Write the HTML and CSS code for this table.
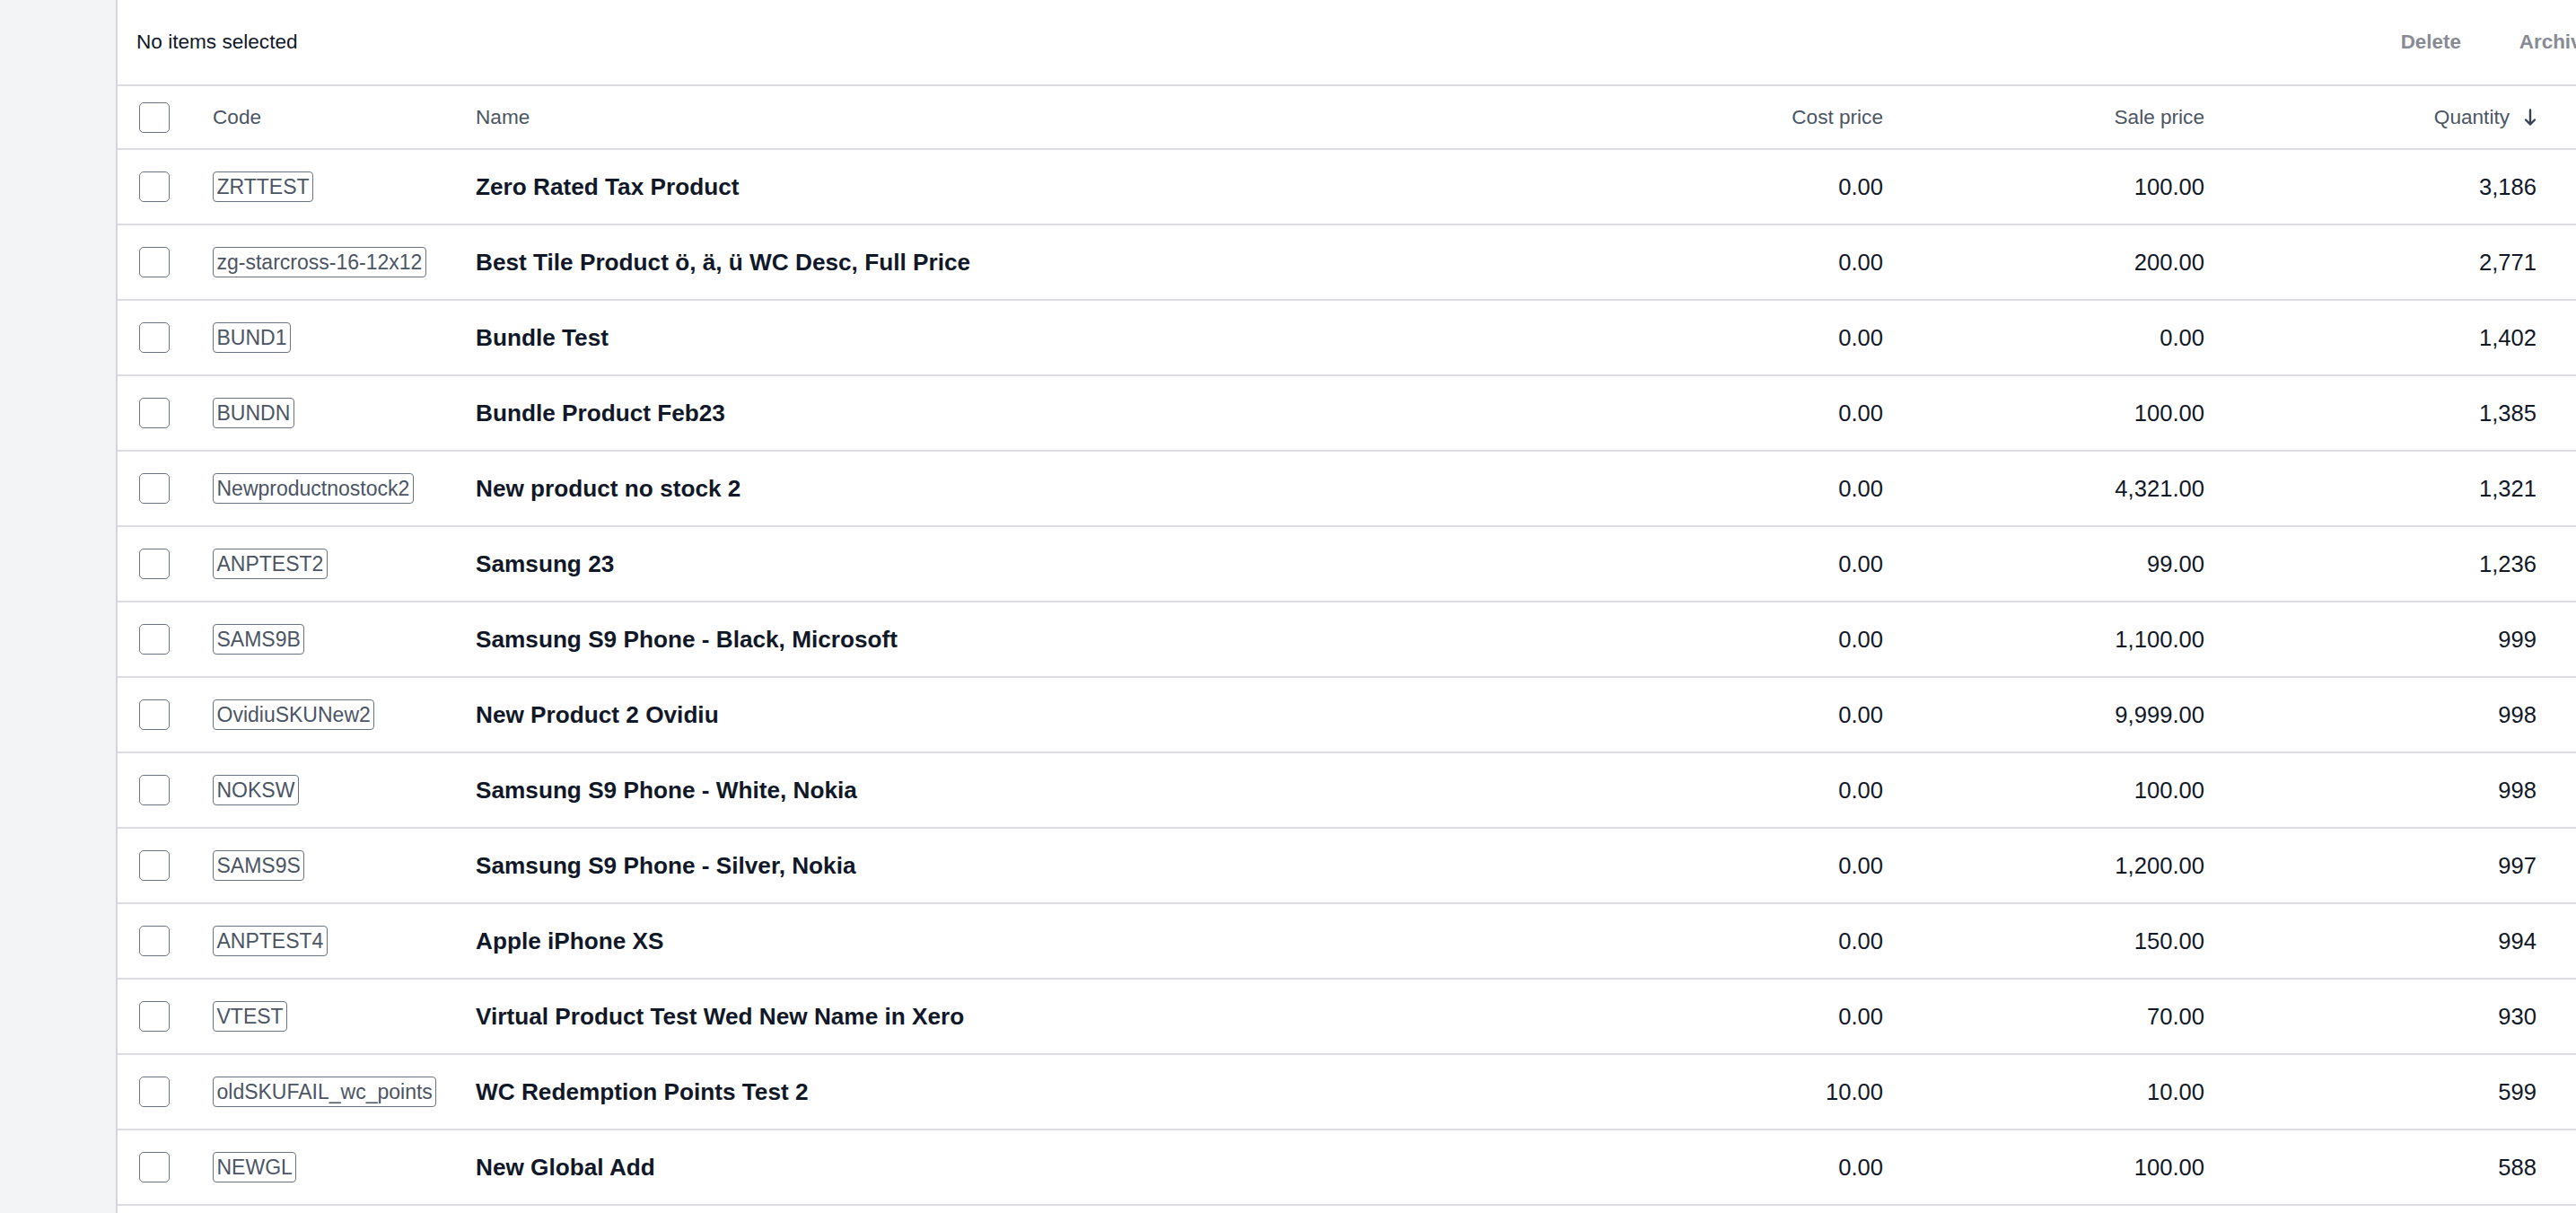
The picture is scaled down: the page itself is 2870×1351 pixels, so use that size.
FILE: index.html
```html
<!DOCTYPE html>
<html lang="en">
<head>
<meta charset="utf-8">
<title>Products</title>
<link rel="stylesheet" href="styles.css">
</head>
<body>
<div class="layout">
  <aside class="sidebar"></aside>
  <main class="main">
    <div class="toolbar">
      <span class="selection">No items selected</span>
      <div class="actions">
        <span class="action">Delete</span>
        <span class="action">Archive</span>
      </div>
    </div>
    <div class="table">
      <div class="row head">
        <div class="cell"><span class="check"></span></div>
        <div class="cell">Code</div>
        <div class="cell">Name</div>
        <div class="cell num">Cost price</div>
        <div class="cell num">Sale price</div>
        <div class="cell num">Quantity<svg class="sort" viewBox="0 0 14 20" width="14" height="20"><path d="M7 1.5V17.5M2 12.5L7 17.5L12 12.5" fill="none" stroke="#374151" stroke-width="2.4" stroke-linecap="round" stroke-linejoin="round"/></svg></div>
        <div class="cell"></div>
      </div>
      <div class="row"><div class="cell"><span class="check"></span></div><div class="cell"><span class="code">ZRTTEST</span></div><div class="cell name">Zero Rated Tax Product</div><div class="cell num">0.00</div><div class="cell num">100.00</div><div class="cell num">3,186</div><div class="cell"></div></div>
      <div class="row"><div class="cell"><span class="check"></span></div><div class="cell"><span class="code">zg-starcross-16-12x12</span></div><div class="cell name">Best Tile Product ö, ä, ü WC Desc, Full Price</div><div class="cell num">0.00</div><div class="cell num">200.00</div><div class="cell num">2,771</div><div class="cell"></div></div>
      <div class="row"><div class="cell"><span class="check"></span></div><div class="cell"><span class="code">BUND1</span></div><div class="cell name">Bundle Test</div><div class="cell num">0.00</div><div class="cell num">0.00</div><div class="cell num">1,402</div><div class="cell"></div></div>
      <div class="row"><div class="cell"><span class="check"></span></div><div class="cell"><span class="code">BUNDN</span></div><div class="cell name">Bundle Product Feb23</div><div class="cell num">0.00</div><div class="cell num">100.00</div><div class="cell num">1,385</div><div class="cell"></div></div>
      <div class="row"><div class="cell"><span class="check"></span></div><div class="cell"><span class="code">Newproductnostock2</span></div><div class="cell name">New product no stock 2</div><div class="cell num">0.00</div><div class="cell num">4,321.00</div><div class="cell num">1,321</div><div class="cell"></div></div>
      <div class="row"><div class="cell"><span class="check"></span></div><div class="cell"><span class="code">ANPTEST2</span></div><div class="cell name">Samsung 23</div><div class="cell num">0.00</div><div class="cell num">99.00</div><div class="cell num">1,236</div><div class="cell"></div></div>
      <div class="row"><div class="cell"><span class="check"></span></div><div class="cell"><span class="code">SAMS9B</span></div><div class="cell name">Samsung S9 Phone - Black, Microsoft</div><div class="cell num">0.00</div><div class="cell num">1,100.00</div><div class="cell num">999</div><div class="cell"></div></div>
      <div class="row"><div class="cell"><span class="check"></span></div><div class="cell"><span class="code">OvidiuSKUNew2</span></div><div class="cell name">New Product 2 Ovidiu</div><div class="cell num">0.00</div><div class="cell num">9,999.00</div><div class="cell num">998</div><div class="cell"></div></div>
      <div class="row"><div class="cell"><span class="check"></span></div><div class="cell"><span class="code">NOKSW</span></div><div class="cell name">Samsung S9 Phone - White, Nokia</div><div class="cell num">0.00</div><div class="cell num">100.00</div><div class="cell num">998</div><div class="cell"></div></div>
      <div class="row"><div class="cell"><span class="check"></span></div><div class="cell"><span class="code">SAMS9S</span></div><div class="cell name">Samsung S9 Phone - Silver, Nokia</div><div class="cell num">0.00</div><div class="cell num">1,200.00</div><div class="cell num">997</div><div class="cell"></div></div>
      <div class="row"><div class="cell"><span class="check"></span></div><div class="cell"><span class="code">ANPTEST4</span></div><div class="cell name">Apple iPhone XS</div><div class="cell num">0.00</div><div class="cell num">150.00</div><div class="cell num">994</div><div class="cell"></div></div>
      <div class="row"><div class="cell"><span class="check"></span></div><div class="cell"><span class="code">VTEST</span></div><div class="cell name">Virtual Product Test Wed New Name in Xero</div><div class="cell num">0.00</div><div class="cell num">70.00</div><div class="cell num">930</div><div class="cell"></div></div>
      <div class="row"><div class="cell"><span class="check"></span></div><div class="cell"><span class="code">oldSKUFAIL_wc_points</span></div><div class="cell name">WC Redemption Points Test 2</div><div class="cell num">10.00</div><div class="cell num">10.00</div><div class="cell num">599</div><div class="cell"></div></div>
      <div class="row"><div class="cell"><span class="check"></span></div><div class="cell"><span class="code">NEWGL</span></div><div class="cell name">New Global Add</div><div class="cell num">0.00</div><div class="cell num">100.00</div><div class="cell num">588</div><div class="cell"></div></div>
    </div>
  </main>
</div>
</body>
</html>
```

FILE: styles.css
```css
html, body {
  margin: 0;
  padding: 0;
  overflow: hidden;
  background: #f3f4f6;
}

body {
  font-family: "Liberation Sans", Arial, sans-serif;
  color: #111827;
}

.layout {
  display: flex;
  min-height: 100vh;
}

.sidebar {
  flex: 0 0 129px;
  background: #f3f4f6;
}

.main {
  flex: 0 0 2780px;
  width: 2780px;
  background: #ffffff;
  border-left: 2px solid #d4d6db;
  min-height: 100vh;
}

.toolbar {
  height: 94px;
  border-bottom: 2px solid #dcdde1;
  display: flex;
  align-items: center;
  justify-content: space-between;
  padding: 0 22px 0 21px;
}

.selection {
  font-size: 22.6px;
  color: #111827;
}

.actions {
  display: flex;
  gap: 65px;
}

.action {
  font-size: 22.4px;
  font-weight: bold;
  color: #878b94;
}

.row {
  display: grid;
  grid-template-columns: 106px 293px 1220px 348px 358px 370px 1fr;
  align-items: center;
  height: 82px;
  border-bottom: 2px solid #dcdde1;
}

.row.head {
  height: 69px;
  font-size: 22.6px;
  color: #4b5563;
}

.cell {
  display: flex;
  align-items: center;
  white-space: nowrap;
}

.cell:first-child {
  padding-left: 24px;
}

.num {
  justify-content: flex-end;
  font-size: 25.6px;
  color: #111827;
}

.head .num {
  font-size: 22.6px;
  color: #4b5563;
}

.sort {
  margin-left: 16px;
  display: block;
}

.check {
  display: block;
  width: 32px;
  height: 32px;
  border: 1.5px solid #6b7280;
  border-radius: 5px;
  background: #ffffff;
}

.code {
  display: inline-block;
  font-size: 23px;
  line-height: 29px;
  padding: 1.5px 3.5px;
  border: 1.5px solid #6b7280;
  border-radius: 4px;
  color: #4b5563;
}

.name {
  font-size: 26.2px;
  font-weight: bold;
  color: #111827;
}
```
